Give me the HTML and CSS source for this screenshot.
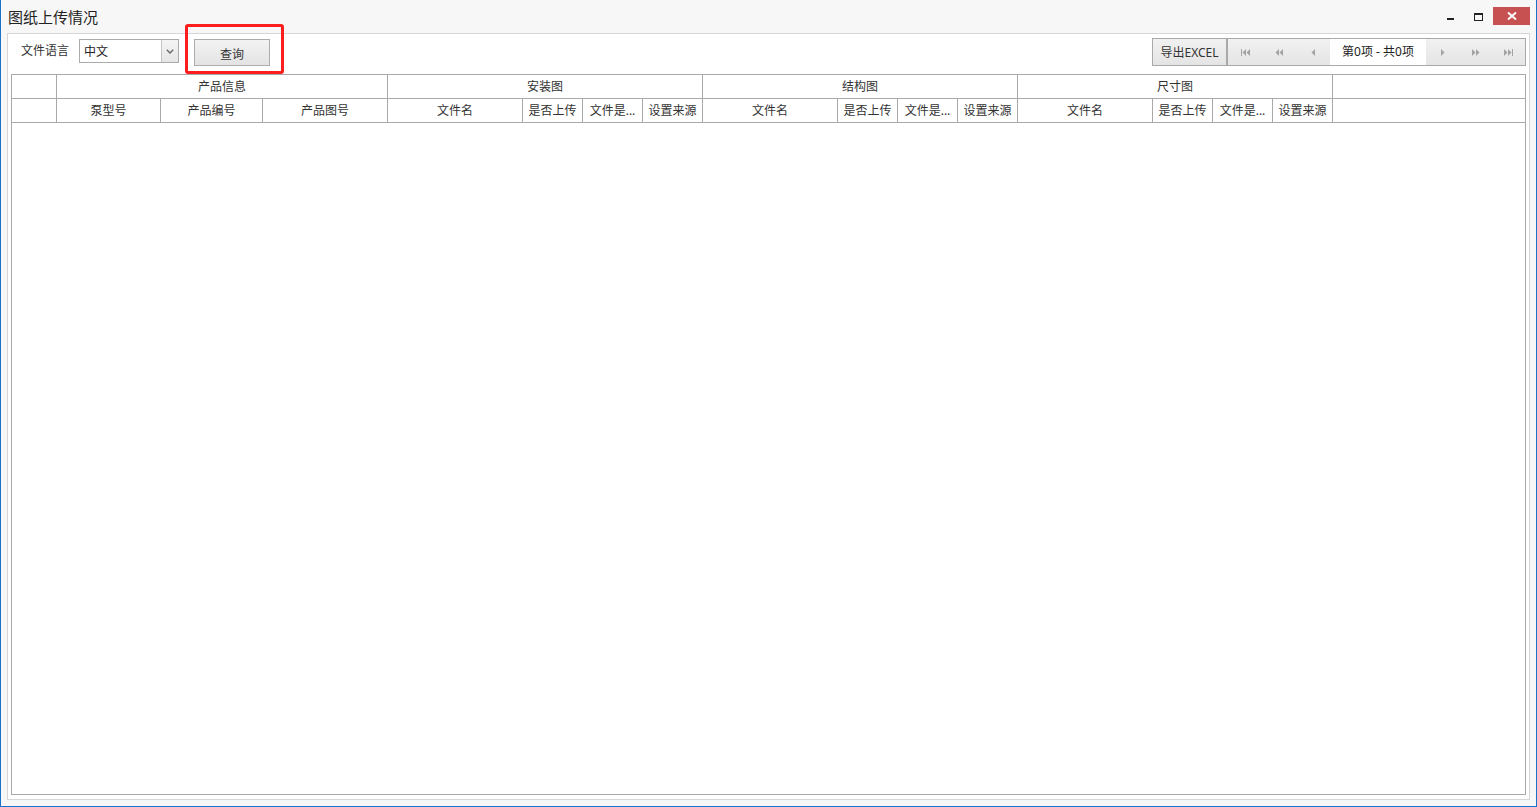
FILE: index.html
```html
<!DOCTYPE html>
<html>
<head>
    <meta charset="UTF-8">
    <title>图纸上传情况</title>
    <link rel="stylesheet" href="styles.css">
</head>
<body>
    <div class="window">
        <div class="titlebar">
            <div class="title">图纸上传情况</div>
            <div class="win-controls">
                <div class="win-btn"><span class="icon-min"></span></div>
                <div class="win-btn"><span class="icon-max"></span></div>
                <div class="win-btn close">
                    <svg width="10" height="8" viewBox="0 0 10 8">
                        <path d="M1 0.5 L9 7.5 M9 0.5 L1 7.5" stroke="#fff" stroke-width="2"/>
                    </svg>
                </div>
            </div>
        </div>

        <div class="panel">
            <div class="toolbar">
                <span class="field-label">文件语言</span>
                <div class="combo">
                    <span class="combo-text">中文</span>
                    <span class="combo-arrow">
                        <svg width="8" height="5" viewBox="0 0 8 5">
                            <path d="M0.8 0.8 L4 4 L7.2 0.8" fill="none" stroke="#6e6e6e" stroke-width="1.5"/>
                        </svg>
                    </span>
                </div>
                <div class="btn-wrap">
                    <button class="btn query-btn">查询</button>
                    <div class="highlight"></div>
                </div>

                <div class="toolbar-right">
                    <button class="btn export-btn">导出EXCEL</button>
                    <div class="pager">
                        <span class="pager-btn">
                            <svg width="9" height="7" viewBox="0 0 9 7"><rect x="0" y="0" width="1" height="7"/><polygon points="5,0 1.5,3.5 5,7"/><polygon points="9,0 5.5,3.5 9,7"/></svg>
                        </span>
                        <span class="pager-btn">
                            <svg width="8" height="7" viewBox="0 0 8 7"><polygon points="4,0 0.5,3.5 4,7"/><polygon points="8,0 4.5,3.5 8,7"/></svg>
                        </span>
                        <span class="pager-btn">
                            <svg width="4" height="7" viewBox="0 0 4 7"><polygon points="4,0 0.5,3.5 4,7"/></svg>
                        </span>
                        <span class="pager-info">第0项 - 共0项</span>
                        <span class="pager-btn">
                            <svg width="4" height="7" viewBox="0 0 4 7"><polygon points="0,0 3.5,3.5 0,7"/></svg>
                        </span>
                        <span class="pager-btn">
                            <svg width="8" height="7" viewBox="0 0 8 7"><polygon points="0,0 3.5,3.5 0,7"/><polygon points="4,0 7.5,3.5 4,7"/></svg>
                        </span>
                        <span class="pager-btn">
                            <svg width="9" height="7" viewBox="0 0 9 7"><polygon points="0,0 3.5,3.5 0,7"/><polygon points="4,0 7.5,3.5 4,7"/><rect x="8" y="0" width="1" height="7"/></svg>
                        </span>
                    </div>
                </div>
            </div>

            <div class="grid-box">
                <div class="grid-head">
                    <!-- first header row -->
                    <div class="hcell"></div>
                    <div class="hcell span-3">产品信息</div>
                    <div class="hcell span-4">安装图</div>
                    <div class="hcell span-4">结构图</div>
                    <div class="hcell span-4">尺寸图</div>
                    <div class="hcell last"></div>

                    <!-- second header row -->
                    <div class="hcell"></div>
                    <div class="hcell">泵型号</div>
                    <div class="hcell">产品编号</div>
                    <div class="hcell">产品图号</div>

                    <div class="hcell">文件名</div>
                    <div class="hcell">是否上传</div>
                    <div class="hcell">文件是...</div>
                    <div class="hcell">设置来源</div>

                    <div class="hcell">文件名</div>
                    <div class="hcell">是否上传</div>
                    <div class="hcell">文件是...</div>
                    <div class="hcell">设置来源</div>

                    <div class="hcell">文件名</div>
                    <div class="hcell">是否上传</div>
                    <div class="hcell">文件是...</div>
                    <div class="hcell">设置来源</div>

                    <div class="hcell last"></div>
                </div>
            </div>
        </div>
    </div>
</body>
</html>
```

FILE: styles.css
```css
* {
    box-sizing: border-box;
}

body {
    margin: 0;
    padding: 0;
    font-family: "Noto Sans", "Noto Sans CJK SC", sans-serif;
    font-size: 12px;
    color: #333;
    background: #fff;
}

.window {
    width: 1537px;
    height: 807px;
    display: flex;
    flex-direction: column;
    border: 1px solid #1a73c8;
    border-top: none;
    background: #f7f7f7;
}

/* title bar */
.titlebar {
    height: 33px;
    display: flex;
    align-items: flex-start;
    flex-shrink: 0;
}

.title {
    padding: 7px 0 0 7px;
    font-size: 15px;
    line-height: 20px;
    color: #222;
}

.win-controls {
    margin-left: auto;
    margin-top: 7px;
    margin-right: 6px;
    display: flex;
}

.win-btn {
    width: 28px;
    height: 18px;
    display: flex;
    justify-content: center;
    align-items: flex-start;
}

.win-btn.close {
    width: 37px;
    margin-left: 1px;
    background: #c75050;
    align-items: center;
}

.icon-min {
    width: 7px;
    height: 2px;
    margin-top: 11px;
    background: #222;
}

.icon-max {
    width: 9px;
    height: 8px;
    margin-top: 6px;
    border: 1px solid #222;
    border-top-width: 2px;
}

/* main panel */
.panel {
    flex: 1;
    margin: 0 6px 6px 6px;
    border: 1px solid #d6d6d6;
    background: #fff;
    padding: 0 3px 4px 3px;
    display: flex;
    flex-direction: column;
}

.toolbar {
    height: 40px;
    display: flex;
    align-items: flex-start;
    flex-shrink: 0;
}

.field-label {
    margin: 10px 0 0 10px;
    line-height: 14px;
    width: 48px;
    white-space: nowrap;
}

.combo {
    margin: 5px 0 0 10px;
    width: 100px;
    height: 24px;
    border: 1px solid #ababab;
    display: flex;
    background: #fff;
}

.combo-text {
    flex: 1;
    padding-left: 4px;
    line-height: 23px;
    color: #222;
}

.combo-arrow {
    width: 17px;
    border-left: 1px solid #c4c4c4;
    background: linear-gradient(#f4f4f4, #e6e6e6);
    display: flex;
    align-items: center;
    justify-content: center;
}

.btn {
    font-family: inherit;
    font-size: 12px;
    color: #333;
    border: 1px solid #acacac;
    background: linear-gradient(#f3f3f3, #e3e3e3);
    padding: 0;
    margin: 0;
}

.btn-wrap {
    position: relative;
    margin: 5px 0 0 15px;
}

.query-btn {
    width: 76px;
    height: 27px;
    padding-top: 3px;
}

/* red annotation box around the query button */
.highlight {
    position: absolute;
    left: -9px;
    top: -15px;
    width: 99px;
    height: 50px;
    border: 3px solid #ff1e1e;
    border-radius: 3px;
}

.toolbar-right {
    margin-left: auto;
    margin-top: 4px;
    display: flex;
}

.export-btn {
    width: 75px;
    height: 28px;
    border-color: #a9a9a9;
    background: linear-gradient(#f1f1f1, #e4e4e4);
}

.pager {
    width: 299px;
    height: 28px;
    border: 1px solid #a9a9a9;
    display: flex;
    background: linear-gradient(#f1f1f1, #e5e5e5);
}

.pager-btn {
    width: 34px;
    display: flex;
    align-items: center;
    justify-content: center;
    fill: #a3a3a3;
}

.pager-btn:nth-child(n+5) {
    width: 33px;
}

.pager-info {
    width: 96px;
    background: #fff;
    text-align: center;
    line-height: 26px;
    color: #222;
    white-space: nowrap;
}

/* grid */
.grid-box {
    flex: 1;
    border: 1px solid #a9a9a9;
    background: #fff;
}

.grid-head {
    display: grid;
    grid-template-columns: 45px 104px 102px 125px repeat(3, 135px 60px 60px 60px) 1fr;
    grid-auto-rows: 24px;
}

.hcell {
    border-right: 1px solid #a9a9a9;
    border-bottom: 1px solid #a9a9a9;
    text-align: center;
    line-height: 23px;
    white-space: nowrap;
    overflow: hidden;
    color: #333;
}

.hcell.last {
    border-right: none;
}

.span-3 {
    grid-column: span 3;
}

.span-4 {
    grid-column: span 4;
}
```
